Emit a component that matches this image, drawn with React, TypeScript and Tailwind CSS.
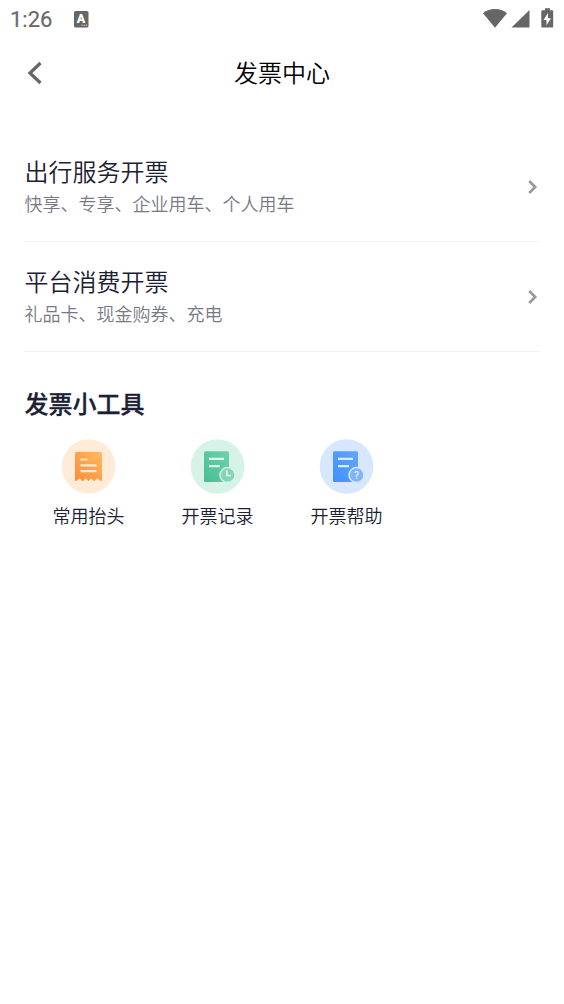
import React from 'react';

const StatusBar: React.FC = () => (
    <div className="flex h-[38px] items-center justify-between pl-[10px] pr-[10px] text-[#6a6a6a]">
        <div className="flex items-center">
            <span className="w-[43px] whitespace-nowrap pt-[2px] font-[Roboto] text-[22px] leading-[38px] font-normal [-webkit-text-stroke:0.2px_#6a6a6a]">1:26</span>
            <svg width="15" height="17" viewBox="0 0 15 17" className="ml-[21px]">
                <rect width="14.5" height="16.5" rx="1.5" fill="#666666" />
                <text x="7" y="12" textAnchor="middle" fontFamily="Roboto" fontWeight="900" fontSize="12.5" fill="#fff">A</text>
                <path d="M7.5 14.2h1.4M9.8 14.2h1.4M12 14.2h1.2" stroke="#ddd" strokeWidth="1" />
            </svg>
        </div>
        <svg width="71" height="22" viewBox="0 0 71 22" fill="#666666">
            <path d="M0 5.2C3.4 2.4 7.5 1 12 1s8.6 1.4 12 4.2L12 19.8z" />
            <path d="M46.5 2v17.5H28.5z" />
            <path fillRule="evenodd" d="M62 .2h5V2.2h2.2q1 0 1 1V18.5q0 1-1 1H59.3q-1 0-1-1V3.2q0-1 1-1H62zM65 5l-4.500 7h3v5.200l4.500-7h-3z" />
        </svg>
    </div>
);

const Header: React.FC = () => (
    <header className="grid h-[70px] grid-cols-[60px_1fr_60px] items-center">
        <svg width="16" height="24" viewBox="0 0 16 24" className="mb-px ml-[27px]" fill="none" stroke="#666666" strokeWidth="3.2">
            <path d="M13.5 2L3 12l10.5 10" />
        </svg>
        <h1 className="pb-[2px] text-center text-2xl font-[350] text-black">发票中心</h1>
    </header>
);

interface InvoiceRowProps {
    title: string;
    desc: string;
}

const InvoiceRow: React.FC<InvoiceRowProps> = ({ title, desc }) => (
    <div className="flex h-[110px] items-center justify-between border-b border-[#f2f2f3]">
        <div className="flex flex-col gap-1 pb-1 pl-[0.5px] font-[350]">
            <div className="text-2xl leading-8 text-[#1c2033]">{title}</div>
            <div className="text-lg leading-6 text-[#777984]">{desc}</div>
        </div>
        <svg width="10" height="16" viewBox="0 0 10 16" className="mr-[2px]" fill="none" stroke="#999999" strokeWidth="2.6">
            <path d="M1.2 2l6 6-6 6" />
        </svg>
    </div>
);

const TitleIcon: React.FC = () => (
    <svg width="55" height="55" viewBox="-0.5 0 55 55">
        <defs>
            <linearGradient id="orange" x1="0" y1="1" x2="1" y2="0">
                <stop offset="0" stopColor="#ff8c3c" />
                <stop offset="1" stopColor="#ffb85c" />
            </linearGradient>
        </defs>
        <ellipse cx="27" cy="27.5" rx="26.8" ry="27.3" fill="#ffebd7" />
        <path d="M13.5 14.5q0-1.500 1.500-1.500h24q1.500 0 1.500 1.500V42l-2.200-.5-2.300-2.200-3.200 3-3.300-3-2.500 3-2.700-3-3.200 3-3.200-3-2.200 2.200-2.200.5z" fill="url(#orange)" />
        <path d="M40.5 15v5q-8-1-15 3 4-8 13.5-10 1.5 0 1.5 2z" fill="#ffc163" opacity=".35" />
        <path d="M19 20.5h7M19 26.3h16M19 32.2h16" stroke="#ffe9d2" strokeWidth="2.2" />
    </svg>
);

const RecordIcon: React.FC = () => (
    <svg width="55" height="55" viewBox="-0.5 0 55 55">
        <defs>
            <linearGradient id="green" x1="0" y1="1" x2="1" y2="0">
                <stop offset="0" stopColor="#46bf91" />
                <stop offset="1" stopColor="#6ed1ad" />
            </linearGradient>
        </defs>
        <ellipse cx="27" cy="27.5" rx="26.8" ry="27.3" fill="#d7f2e7" />
        <rect x="13.5" y="12.3" width="25" height="30.7" rx="1.5" fill="url(#green)" />
        <path d="M18.5 19.8h15M18.5 27.2h11" stroke="#dff5ec" strokeWidth="2.2" />
        <circle cx="37" cy="36" r="7.5" fill="#80d6b7" stroke="#d7f2e7" strokeWidth="1.6" />
        <path d="M36.3 31.5v5h4.2" fill="none" stroke="#effbf6" strokeWidth="1.5" />
    </svg>
);

const HelpIcon: React.FC = () => (
    <svg width="55" height="55" viewBox="-0.5 0 55 55">
        <defs>
            <linearGradient id="blue" x1="0" y1="1" x2="1" y2="0">
                <stop offset="0" stopColor="#3f8ffc" />
                <stop offset="1" stopColor="#64a6ff" />
            </linearGradient>
        </defs>
        <ellipse cx="27" cy="27.5" rx="26.8" ry="27.3" fill="#d6e7ff" />
        <rect x="13.5" y="12.3" width="25" height="30.7" rx="1.5" fill="url(#blue)" />
        <path d="M18.5 19.8h15M18.5 27.2h11" stroke="#deebff" strokeWidth="2.2" />
        <circle cx="37" cy="36" r="7.5" fill="#80b3fd" stroke="#d6e7ff" strokeWidth="1.6" />
        <text x="37" y="39.7" textAnchor="middle" fontFamily="Roboto" fontWeight="500" fontSize="10.5" fill="#e3efff">?</text>
    </svg>
);

const tools = [
    { label: '常用抬头', icon: <TitleIcon /> },
    { label: '开票记录', icon: <RecordIcon /> },
    { label: '开票帮助', icon: <HelpIcon /> },
];

const App: React.FC = () => {
    return (
        <div className="flex min-h-[1004px] flex-col bg-white font-['Noto_Sans_CJK_SC',sans-serif]">
            <StatusBar />
            <Header />
            <main className="px-6 pt-6">
                <InvoiceRow title="出行服务开票" desc="快享、专享、企业用车、个人用车" />
                <InvoiceRow title="平台消费开票" desc="礼品卡、现金购券、充电" />

                <h2 className="mt-[35px] pl-[0.5px] text-2xl leading-8 font-medium text-[#1c2033] [-webkit-text-stroke:0.3px_#1c2033]">发票小工具</h2>
                <div className="mt-5 grid grid-cols-4">
                    {tools.map((tool) => (
                        <div key={tool.label} className="flex flex-col items-center gap-[9px]">
                            {tool.icon}
                            <span className="text-lg leading-6 font-[350] text-[#1c2033]">{tool.label}</span>
                        </div>
                    ))}
                </div>
            </main>
        </div>
    );
};

export default App;
